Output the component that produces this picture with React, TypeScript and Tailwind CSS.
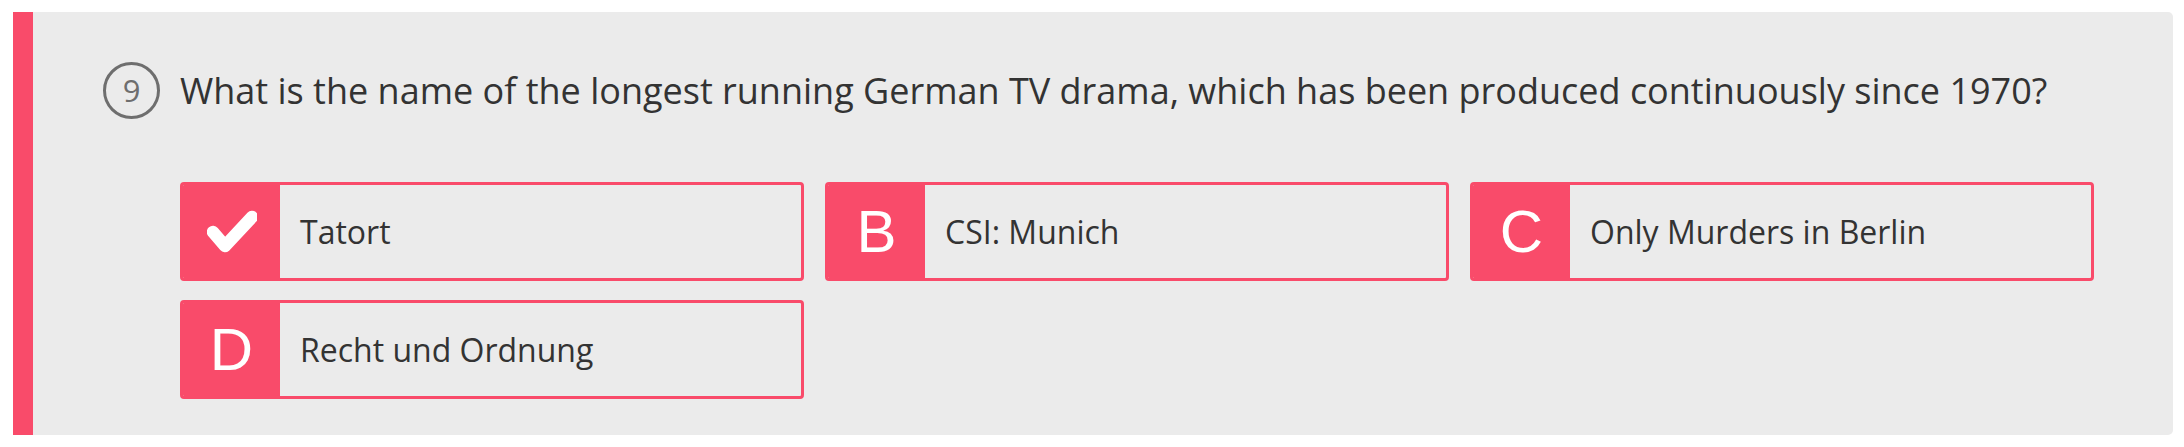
import React from "react";

const RED = "bg-[#F94B6A]";

function Option({ label, text }: { label: React.ReactNode; text: string }) {
  return (
    <div className="flex h-[99px] overflow-hidden rounded-[4px] border-[3px] border-[#F94B6A]">
      <div className={`${RED} flex w-[97px] shrink-0 items-center justify-center text-white`}>
        {label}
      </div>
      <div className="flex items-center pl-[20px] text-[32px] text-[#333333]" style={{ fontFamily: "'Open Sans', sans-serif" }}>
        {text}
      </div>
    </div>
  );
}

function Letter({ ch }: { ch: string }) {
  return (
    <span className="text-[60px] leading-none text-white" style={{ fontFamily: "'Liberation Sans', Arial, sans-serif" }}>
      {ch}
    </span>
  );
}

export default function App() {
  return (
    <div className="min-h-[447px] w-[2184px] bg-white pl-[13px] pr-[11px] pt-[12px]" style={{ fontFamily: "'Open Sans', sans-serif" }}>
      <div className="h-[423px] rounded-r-[5px] border-l-[20px] border-[#F94B6A] bg-[#EBEBEB] pl-[70px] pr-[79px] pt-[50px]">
        <div className="flex items-center gap-[20px]">
          <div className="flex h-[57px] w-[57px] shrink-0 items-center justify-center rounded-full border-[3px] border-[#6E6E6E] text-[31px] text-[#6E6E6E]">
            9
          </div>
          <div className="text-[36px] leading-none text-[#333333]">
            What is the name of the longest running German TV drama, which has been produced continuously since 1970?
          </div>
        </div>
        <div className="mt-[63px] ml-[77px] grid grid-cols-3 gap-x-[21px] gap-y-[19px]">
          <Option
            label={
              <svg width="50" height="44" viewBox="204 209 50 44">
                <polyline
                  points="210,231 222,245 249,216"
                  fill="none"
                  stroke="white"
                  strokeWidth="12.5"
                  strokeLinecap="round"
                  strokeLinejoin="round"
                />
              </svg>
            }
            text="Tatort"
          />
          <Option label={<Letter ch="B" />} text="CSI: Munich" />
          <Option label={<Letter ch="C" />} text="Only Murders in Berlin" />
          <Option label={<Letter ch="D" />} text="Recht und Ordnung" />
        </div>
      </div>
    </div>
  );
}
